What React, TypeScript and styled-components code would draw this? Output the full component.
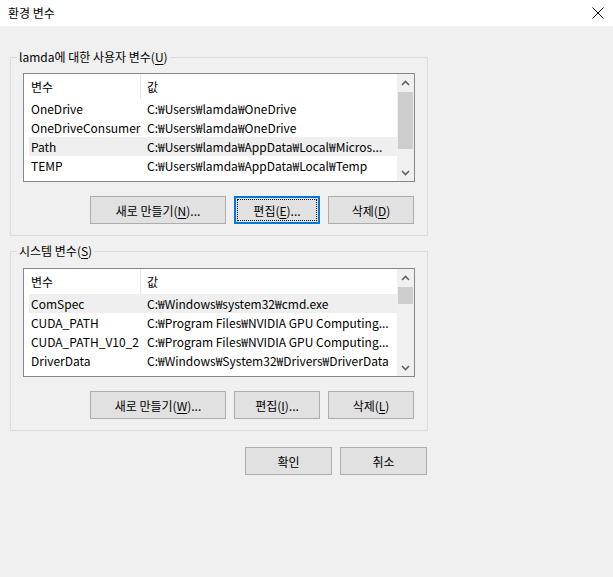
import React from "react";
import styled, { createGlobalStyle, css } from "styled-components";

const GlobalStyle = createGlobalStyle`
  html, body { margin: 0; padding: 0; background: #f0f0f0; }
  body {
    font-family: "Noto Sans CJK KR", "Noto Sans", sans-serif;
    font-size: 12px;
    color: #000;
  }
  * { box-sizing: border-box; }
`;

const Window = styled.div`
  width: 613px;
  height: 577px;
  background: #f0f0f0;
  display: flex;
  flex-direction: column;
  overflow: hidden;
`;

const TitleBar = styled.div`
  height: 26px;
  background: #ffffff;
  display: flex;
  align-items: center;
  justify-content: space-between;
  padding: 0 9px 0 8px;
  flex-shrink: 0;
`;

const Title = styled.span`
  font-size: 12px;
  line-height: 16px;
`;

const CloseIcon = styled.svg`
  width: 12px;
  height: 12px;
  display: block;
`;

const Body = styled.div`
  width: 428px;
  padding: 31px 0 0 10px;
  display: flex;
  flex-direction: column;
`;

const Group = styled.div<{ $top: number }>`
  position: relative;
  border: 1px solid #dcdcdc;
  padding: ${(p) => p.$top}px 12px 11px 12px;
  & + & { margin-top: 15px; }
`;

const Legend = styled.div`
  position: absolute;
  top: -9px;
  left: 6px;
  padding: 0 2px;
  background: #f0f0f0;
  line-height: 16px;
  white-space: nowrap;
`;

const U = styled.span`
  text-decoration: underline;
  text-underline-offset: 2px;
`;

const ListView = styled.div`
  height: 109px;
  border: 1px solid #828790;
  background: #ffffff;
  display: flex;
`;

const ListContent = styled.div`
  flex: 1;
  min-width: 0;
  overflow: hidden;
  padding-left: 5px;
`;

const HeaderRow = styled.div`
  display: grid;
  grid-template-columns: 112px 1fr;
  height: 25px;
`;

const HeaderCell = styled.div<{ $first?: boolean }>`
  line-height: 25px;
  padding-left: ${(p) => (p.$first ? 2 : 6)}px;
  ${(p) =>
    p.$first &&
    css`
      border-right: 1px solid #e5e5e5;
    `}
`;

const Row = styled.div<{ $selected?: boolean }>`
  display: grid;
  grid-template-columns: 112px 1fr;
  height: 19px;
  background: ${(p) => (p.$selected ? "#efefef" : "transparent")};
`;

const Cell = styled.div<{ $first?: boolean }>`
  line-height: 19px;
  white-space: nowrap;
  overflow: hidden;
  padding-left: ${(p) => (p.$first ? 2 : 6)}px;
`;

const ScrollBar = styled.div`
  width: 17px;
  flex-shrink: 0;
  background: #f0f0f0;
  display: flex;
  flex-direction: column;
`;

const ArrowBox = styled.div`
  height: 17px;
  display: flex;
  align-items: center;
  justify-content: center;
  flex-shrink: 0;
`;

const Track = styled.div`
  flex: 1;
  padding-top: 1px;
`;

const Thumb = styled.div<{ $h: number }>`
  height: ${(p) => p.$h}px;
  background: #cdcdcd;
  margin: 0 1px;
`;

const ButtonRow = styled.div`
  display: flex;
  justify-content: flex-end;
  gap: 8px;
  margin-top: 14px;
  padding-right: 1px;
`;

const Button = styled.button<{ $w: number; $focused?: boolean }>`
  position: relative;
  width: ${(p) => p.$w}px;
  height: 28px;
  background: #e1e1e1;
  border: 1px solid #adadad;
  font-family: "Noto Sans CJK KR", "Noto Sans", sans-serif;
  font-size: 12px;
  color: #000;
  padding: 0;
  margin: 0;
  ${(p) =>
    p.$focused &&
    css`
      border: 2px solid #0078d7;
      &::after {
        content: "";
        position: absolute;
        inset: 1px;
        border: 1px dotted #000;
      }
    `}
`;

const Footer = styled.div`
  display: flex;
  justify-content: flex-end;
  gap: 8px;
  margin-top: 16px;
  padding-right: 1px;
`;

const Up = () => (
  <svg width="9" height="6" viewBox="0 0 9 6">
    <path d="M1 5 L4.5 1.5 L8 5" fill="none" stroke="#606060" strokeWidth="1.6" />
  </svg>
);
const Down = () => (
  <svg width="9" height="6" viewBox="0 0 9 6">
    <path d="M1 1 L4.5 4.5 L8 1" fill="none" stroke="#606060" strokeWidth="1.6" />
  </svg>
);

type Item = { name: string; value: string; selected?: boolean };

const List: React.FC<{ items: Item[]; thumb: number }> = ({ items, thumb }) => (
  <ListView>
    <ListContent>
      <HeaderRow>
        <HeaderCell $first>변수</HeaderCell>
        <HeaderCell>값</HeaderCell>
      </HeaderRow>
      {items.map((it) => (
        <Row key={it.name} $selected={it.selected}>
          <Cell $first>{it.name}</Cell>
          <Cell>{it.value}</Cell>
        </Row>
      ))}
    </ListContent>
    <ScrollBar>
      <ArrowBox>
        <Up />
      </ArrowBox>
      <Track>
        <Thumb $h={thumb} />
      </Track>
      <ArrowBox>
        <Down />
      </ArrowBox>
    </ScrollBar>
  </ListView>
);

const userVars: Item[] = [
  { name: "OneDrive", value: "C:₩Users₩lamda₩OneDrive" },
  { name: "OneDriveConsumer", value: "C:₩Users₩lamda₩OneDrive" },
  { name: "Path", value: "C:₩Users₩lamda₩AppData₩Local₩Micros...", selected: true },
  { name: "TEMP", value: "C:₩Users₩lamda₩AppData₩Local₩Temp" },
];

const sysVars: Item[] = [
  { name: "ComSpec", value: "C:₩Windows₩system32₩cmd.exe", selected: true },
  { name: "CUDA_PATH", value: "C:₩Program Files₩NVIDIA GPU Computing..." },
  { name: "CUDA_PATH_V10_2", value: "C:₩Program Files₩NVIDIA GPU Computing..." },
  { name: "DriverData", value: "C:₩Windows₩System32₩Drivers₩DriverData" },
];

export default function App() {
  return (
    <>
      <GlobalStyle />
      <Window>
        <TitleBar>
          <Title>환경 변수</Title>
          <CloseIcon viewBox="0 0 12 12">
            <path d="M0.5 0.5 L11.5 11.5 M11.5 0.5 L0.5 11.5" stroke="#000" strokeWidth="1" />
          </CloseIcon>
        </TitleBar>
        <Body>
          <Group $top={15}>
            <Legend>
              lamda에 대한 사용자 변수(<U>U</U>)
            </Legend>
            <List items={userVars} thumb={57} />
            <ButtonRow>
              <Button $w={136}>
                새로 만들기(<U>N</U>)...
              </Button>
              <Button $w={86} $focused>
                편집(<U>E</U>)...
              </Button>
              <Button $w={86}>
                삭제(<U>D</U>)
              </Button>
            </ButtonRow>
          </Group>
          <Group $top={16}>
            <Legend>
              시스템 변수(<U>S</U>)
            </Legend>
            <List items={sysVars} thumb={17} />
            <ButtonRow>
              <Button $w={136}>
                새로 만들기(<U>W</U>)...
              </Button>
              <Button $w={86}>
                편집(<U>I</U>)...
              </Button>
              <Button $w={86}>
                삭제(<U>L</U>)
              </Button>
            </ButtonRow>
          </Group>
          <Footer>
            <Button $w={87}>확인</Button>
            <Button $w={87}>취소</Button>
          </Footer>
        </Body>
      </Window>
    </>
  );
}
